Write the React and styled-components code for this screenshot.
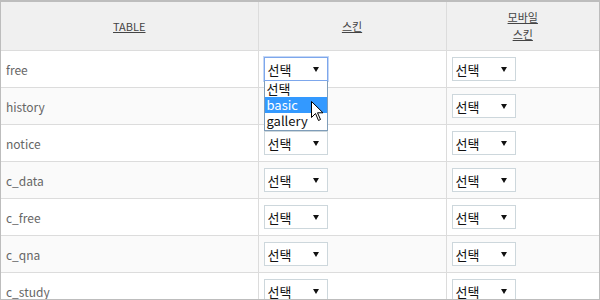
import React from "react";
import styled, { createGlobalStyle } from "styled-components";

const Global = createGlobalStyle`
  html, body { margin: 0; padding: 0; background: #fff; }
  body { font-family: "Noto Sans CJK KR", "Noto Sans", sans-serif; }
`;

// Marco exterior de la captura
const Frame = styled.div`
  width: 600px;
  height: 300px;
  box-sizing: border-box;
  border: 1px solid #bdbdbd;
  border-top-width: 2px;
  overflow: hidden;
  position: relative;
`;

const Table = styled.table`
  width: 100%;
  border-collapse: collapse;
  table-layout: fixed;
`;

const HeadCell = styled.th`
  height: 48px;
  padding: 0;
  background: #f0f0f0;
  border: 1px solid #dcdcdc;
  border-top: none;
  font-size: 11px;
  font-weight: normal;
  line-height: 17px;
  color: #444;
  text-decoration: underline;
  text-align: center;
  vertical-align: middle;
  &:first-child { border-left: none; }
  &:last-child { border-right: none; }
`;

const Row = styled.tr`
  background: ${(p) => (p.$alt ? "#fafafa" : "#fff")};
`;

const Cell = styled.td`
  height: 36px;
  padding: 0 5px;
  border: 1px solid #dcdcdc;
  font-size: 12px;
  color: #666;
  vertical-align: middle;
  position: relative;
  &:first-child { border-left: none; }
  &:last-child { border-right: none; }
`;

const SelectBox = styled.div`
  width: 64px;
  height: 24px;
  box-sizing: border-box;
  display: flex;
  align-items: center;
  justify-content: space-between;
  padding: 0 8px 0 3px;
  background: #fff;
  border: 1px solid ${(p) => (p.$focus ? "#7da7ec" : "#cdd7dc")};
  box-shadow: ${(p) => (p.$focus ? "0 0 0 1px rgba(125,167,236,0.45)" : "none")};
  font-size: 13px;
  color: #111;
`;

const Arrow = styled.span`
  width: 0;
  height: 0;
  border-left: 3px solid transparent;
  border-right: 3px solid transparent;
  border-top: 5px solid #111;
`;

// Lista desplegada del select
const Menu = styled.ul`
  position: absolute;
  left: 5px;
  top: 30px;
  z-index: 2;
  width: 64px;
  box-sizing: border-box;
  margin: 0;
  padding: 0 0 1px;
  list-style: none;
  background: #fff;
  border: 1px solid #7f9db9;
  border-top: none;
`;

const Option = styled.li`
  height: 16px;
  line-height: 15px;
  padding: 0 2px;
  font-size: 13px;
  color: ${(p) => (p.$active ? "#fff" : "#111")};
  background: ${(p) => (p.$active ? "#3399ff" : "transparent")};
`;

const Cursor = styled.svg`
  position: absolute;
  left: 310px;
  top: 99px;
  z-index: 3;
`;

const Select = ({ focus }) => (
  <SelectBox $focus={focus}>
    <span>선택</span>
    <Arrow />
  </SelectBox>
);

const tables = ["free", "history", "notice", "c_data", "c_free", "c_qna", "c_study"];

export default function App() {
  return (
    <>
      <Global />
      <Frame>
        <Table>
          <colgroup>
            <col style={{ width: 257 }} />
            <col style={{ width: 188 }} />
            <col />
          </colgroup>
          <thead>
            <tr>
              <HeadCell>TABLE</HeadCell>
              <HeadCell>스킨</HeadCell>
              <HeadCell>
                모바일
                <br />
                스킨
              </HeadCell>
            </tr>
          </thead>
          <tbody>
            {tables.map((name, i) => (
              <Row key={name} $alt={i % 2 === 1}>
                <Cell>{name}</Cell>
                <Cell>
                  <Select focus={i === 0} />
                  {i === 0 && (
                    <Menu>
                      <Option>선택</Option>
                      <Option $active>basic</Option>
                      <Option>gallery</Option>
                    </Menu>
                  )}
                </Cell>
                <Cell>
                  <Select />
                </Cell>
              </Row>
            ))}
          </tbody>
        </Table>
        <Cursor width="13" height="21" viewBox="0 0 13 21">
          <path
            d="M0.5 0.5 L0.5 16.5 L4.5 12.5 L7.5 19.5 L9.5 18.5 L6.5 11.8 L12 11.8 Z"
            fill="#fff"
            stroke="#000"
            strokeWidth="1"
            strokeLinejoin="miter"
          />
        </Cursor>
      </Frame>
    </>
  );
}
